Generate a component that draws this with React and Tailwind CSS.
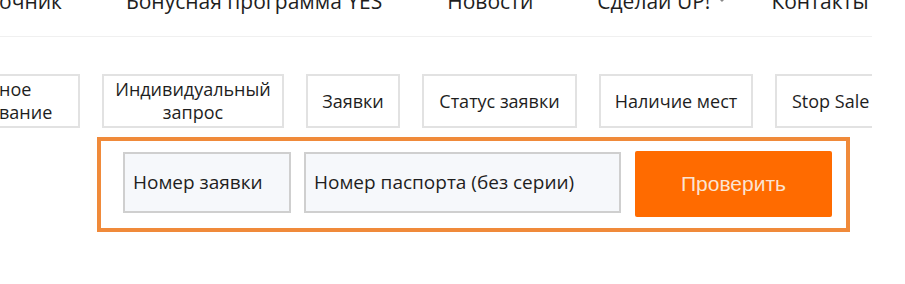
export default function App() {
  const font = { fontFamily: '"Open Sans", "Noto Sans", sans-serif' };
  return (
    <div className="w-[905px] h-[284px] bg-white overflow-hidden" style={font}>
      <div className="w-[872px] flex flex-col">
        {/* top nav, clipped at top by the page edge */}
        <div className="h-[37px] border-b border-[#f0f0f0] flex flex-col">
          <div className="flex items-center text-[21px] text-[#1e1e1e] leading-none mt-[-9px] whitespace-nowrap">
            <span className="ml-[-1px]">очник</span>
            <span className="ml-[64px]">Бонусная программа YES</span>
            <span className="ml-[65px]">Новости</span>
            <span className="ml-[64px] flex items-center">
              Сделай UP!
              <svg width="12" height="12" viewBox="0 0 12 12" className="ml-[6px] mt-[-6px]" fill="none" stroke="#888" strokeWidth="1.4">
                <path d="M2 4l4 4 4-4" />
              </svg>
            </span>
            <span className="ml-[43px]">Контакты</span>
          </div>
        </div>

        {/* tabs */}
        <div className="flex gap-[22px] mt-[37px] overflow-hidden text-[18px] text-[#1e1e1e] leading-[23px]">
          <div className="shrink-0 ml-[-2px] w-[82px] h-[54px] border-2 border-[#e2e2e2] border-l-0 flex flex-col justify-center pl-[1px]">
            <span>ное</span>
            <span>вание</span>
          </div>
          <div className="shrink-0 w-[182px] h-[54px] border-2 border-[#e2e2e2] flex flex-col items-center justify-center">
            <span>Индивидуальный</span>
            <span>запрос</span>
          </div>
          <div className="shrink-0 w-[94px] h-[54px] border-2 border-[#e2e2e2] flex items-center justify-center">
            Заявки
          </div>
          <div className="shrink-0 w-[155px] h-[54px] border-2 border-[#e2e2e2] flex items-center justify-center">
            Статус заявки
          </div>
          <div className="shrink-0 w-[154px] h-[54px] border-2 border-[#e2e2e2] flex items-center justify-center">
            Наличие мест
          </div>
          <div className="shrink-0 w-[154px] h-[54px] border-2 border-[#e2e2e2] flex items-center pl-[15px] whitespace-nowrap">
            Stop Sale
          </div>
        </div>

        {/* form box */}
        <div className="ml-[97px] mt-[9px] w-[753px] h-[95px] border-4 border-[#f08a3a] flex items-start pt-[10px] pl-[22px] pr-[14px] text-[19px] text-[#1e1e1e]">
          <div className="mt-[1px] w-[168px] h-[61px] border-2 border-[#cfcfcf] bg-[#f6f8fb] flex items-center pl-[8px] whitespace-nowrap">
            Номер заявки
          </div>
          <div className="mt-[1px] ml-[13px] w-[317px] h-[61px] border-2 border-[#cfcfcf] bg-[#f6f8fb] flex items-center pl-[8px] whitespace-nowrap">
            Номер паспорта (без серии)
          </div>
          <button
            className="ml-[14px] w-[197px] h-[66px] bg-[#ff6b00] rounded-[2px] text-[#fbe4d2] text-[21px] flex items-center justify-center"
            style={{ fontFamily: '"Liberation Sans", Arial, sans-serif' }}
          >
            Проверить
          </button>
        </div>
      </div>
    </div>
  );
}
